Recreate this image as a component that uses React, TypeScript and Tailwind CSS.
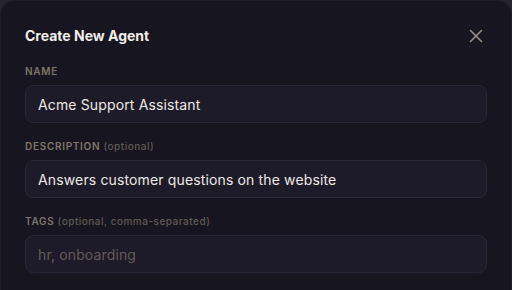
import React from "react";
import { X } from "lucide-react";

const Field = ({
  label,
  hint,
  value,
  placeholder,
}: {
  label: string;
  hint?: string;
  value?: string;
  placeholder?: string;
}) => (
  <div className="flex flex-col">
    <label className="text-[10px] font-semibold uppercase tracking-[0.07em] text-[#7d776a] leading-[14px] mb-[7px]">
      {label}
      {hint && (
        <span className="normal-case tracking-[0.05em] font-medium text-[#5f5a55]"> {hint}</span>
      )}
    </label>
    <input
      className="h-[38px] w-full rounded-lg border border-[#2a2637] bg-[#1e1b29] px-[12px] text-[14px] tracking-[0.01em] text-[#ece9e4] placeholder-[#615c58] outline-none"
      defaultValue={value}
      placeholder={placeholder}
    />
  </div>
);

export default function App() {
  return (
    <div
      className="w-[512px] h-[290px] bg-[#26242c] overflow-hidden"
      style={{ fontFamily: "Inter, 'Noto Sans', sans-serif" }}
    >
      <div className="h-[300px] w-full rounded-t-[14px] border border-[#221f2b] bg-[#17151f] px-[24px] pt-[25px]">
        <div className="flex items-center justify-between mb-[18px]">
          <h2 className="text-[14px] font-bold text-[#f1eee9] leading-[20px]">Create New Agent</h2>
          <button className="text-[#9a9484] -my-[1px]">
            <X size={22} strokeWidth={1.7} />
          </button>
        </div>
        <div className="flex flex-col gap-[16px]">
          <Field label="Name" value="Acme Support Assistant" />
          <Field label="Description" hint="(optional)" value="Answers customer questions on the website" />
          <Field label="Tags" hint="(optional, comma-separated)" placeholder="hr, onboarding" />
        </div>
      </div>
    </div>
  );
}
